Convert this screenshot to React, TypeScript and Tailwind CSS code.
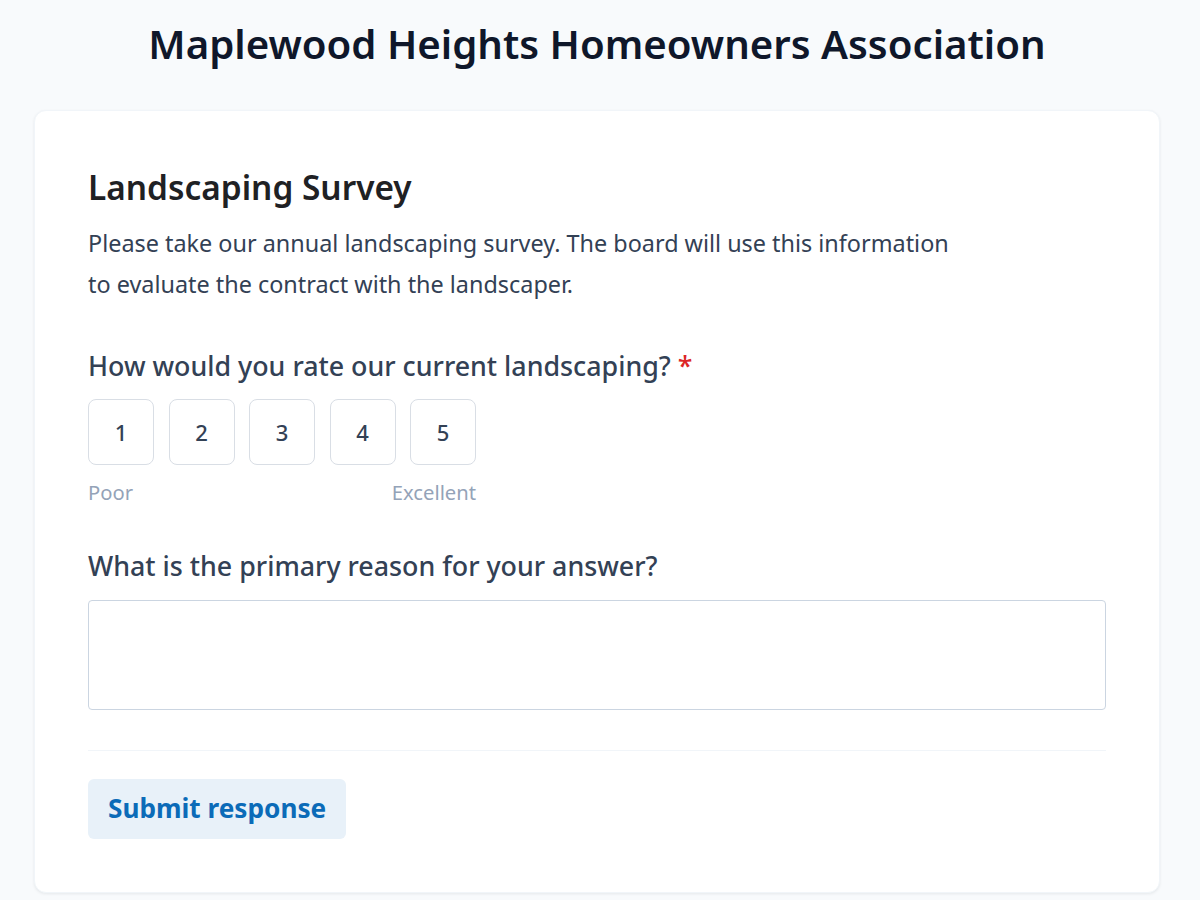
export default function App() {
  return (
    <div className="min-h-[900px] bg-[#f8fafc] font-['Noto_Sans',sans-serif] pt-[14px] pl-[34px] pr-[40px] pb-[8px]">
      <h1 className="text-center text-[40.2px] leading-[60px] font-semibold text-[#0f172a]">
        Maplewood Heights Homeowners Association
      </h1>
      <div className="mt-[36px] w-[1126px] bg-white rounded-[12px] shadow-[0_1px_3px_rgba(15,23,42,0.08)] border border-[#f1f5f9] p-[53px]">
        <h2 className="text-[33.4px] leading-[46px] font-semibold text-[#1f2124]">Landscaping Survey</h2>
        <p className="mt-[13px] text-[23.4px] leading-[41px] text-[#334155] max-w-[880px]">
          Please take our annual landscaping survey. The board will use this information to evaluate the contract with the landscaper.
        </p>
        <div className="mt-[43px] text-[26.8px] leading-[36px] font-medium text-[#334155]">
          How would you rate our current landscaping? <span className="text-[#dc2626]">*</span>
        </div>
        <div className="mt-[15px] inline-flex flex-col">
          <div className="flex gap-[14.5px]">
            {[1, 2, 3, 4, 5].map((n) => (
              <button
                key={n}
                className="w-[66px] h-[66px] rounded-[8px] border border-[#d9dee5] bg-white text-[22px] font-medium text-[#334155] flex items-center justify-center"
              >
                {n}
              </button>
            ))}
          </div>
          <div className="mt-[13px] flex justify-between text-[20.2px] leading-[28px] text-[#94a3b8]">
            <span>Poor</span>
            <span>Excellent</span>
          </div>
        </div>
        <div className="mt-[42px] text-[26.8px] leading-[36px] font-medium text-[#334155]">
          What is the primary reason for your answer?
        </div>
        <textarea className="mt-[16px] block w-full h-[110px] rounded-[4px] border border-[#cbd5e1] resize-none outline-none" />
        <div className="mt-[40px] border-t border-[#f1f5f9]" />
        <button className="mt-[28px] h-[60px] px-[20px] rounded-[6px] bg-[#e8f1f9] text-[#0b6bb8] text-[26.2px] font-bold">
          Submit response
        </button>
      </div>
    </div>
  );
}
